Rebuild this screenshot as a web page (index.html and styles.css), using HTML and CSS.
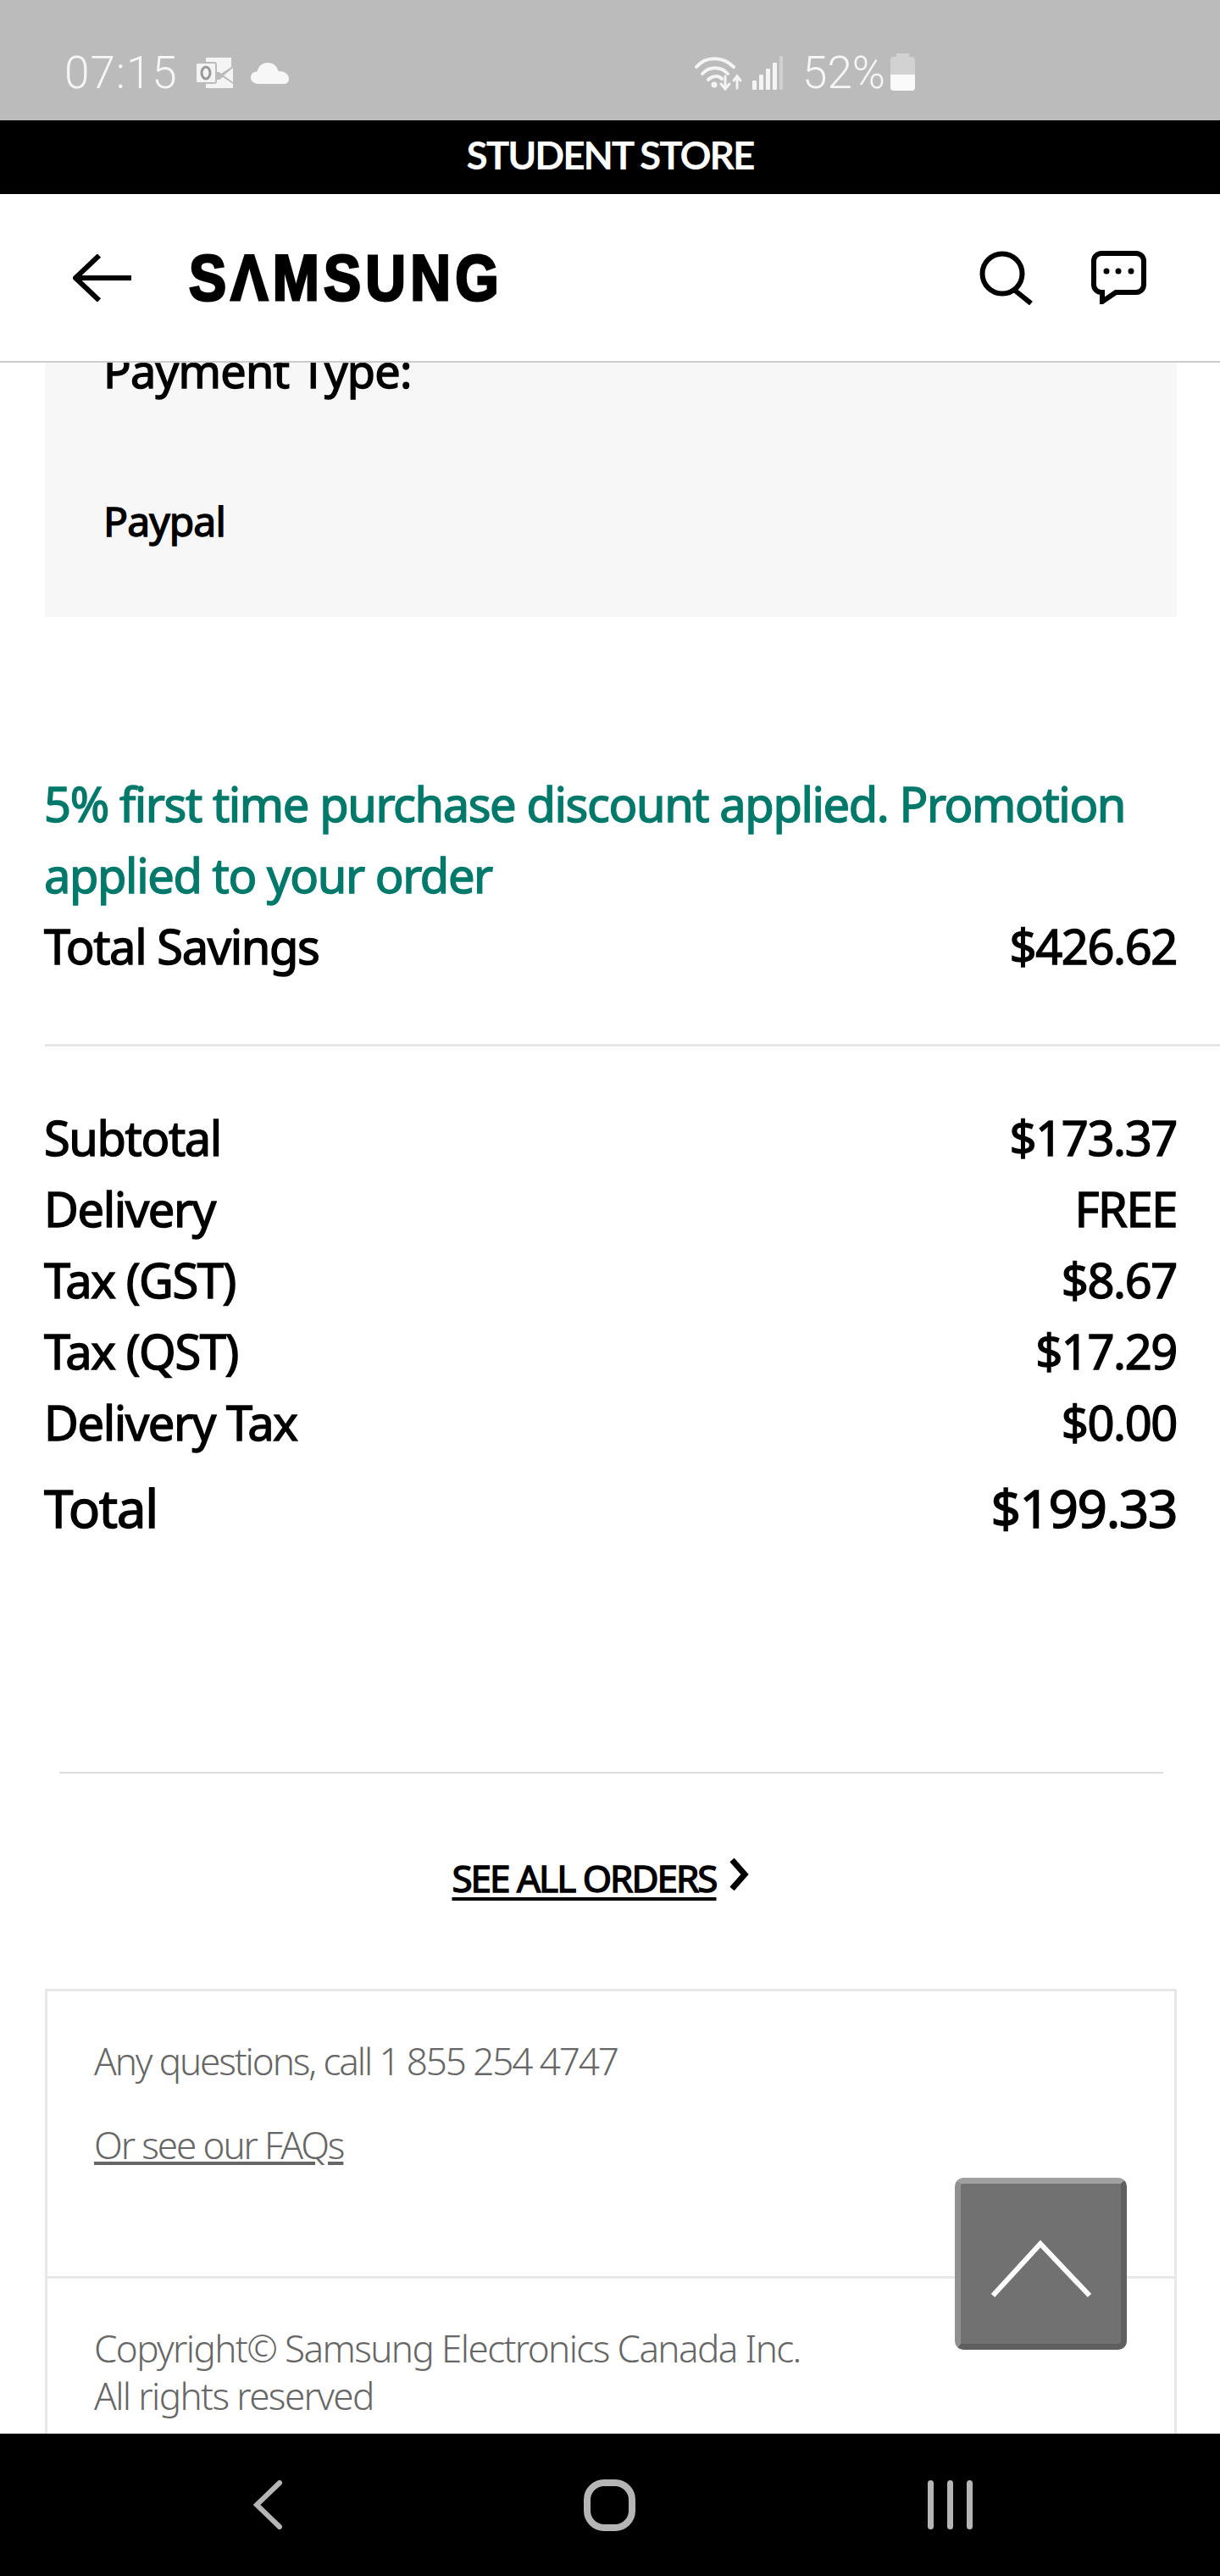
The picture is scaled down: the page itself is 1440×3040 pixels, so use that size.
FILE: index.html
```html
<!DOCTYPE html>
<html lang="en">
<head>
  <meta charset="UTF-8" />
  <meta name="viewport" content="width=device-width, initial-scale=1" />
  <title>Order details</title>
  <link rel="stylesheet" href="styles.css">
</head>
<body>

<div class="app">
  <div class="statusbar">
    <div class="status-left">
      <span class="clock">07:15</span>
      <svg class="ic-outlook" viewBox="0 0 44 36" aria-hidden="true">
        <path d="M12 0h30v11L30 19l-2-2H12z" fill="#f4f4f4"/>
        <path d="M12 26h16l4-3 12 8v5H12z" fill="#f4f4f4"/>
        <path d="M44 12v17l-11-8z" fill="#f4f4f4"/>
        <rect x="0" y="6" width="24" height="24" rx="2" fill="#f4f4f4" stroke="#bbb" stroke-width="2"/>
        <ellipse cx="12" cy="18" rx="5" ry="7" fill="none" stroke="#999" stroke-width="3"/>
      </svg>
      <svg class="ic-cloud" viewBox="0 0 45 25" aria-hidden="true">
        <path d="M9 25C3 25 0 21 0 17.500 0 13 3.500 10.500 7.500 10.500 9 4 14 0 20 0c6.500 0 11 4 12.500 10 6.500-.5 12.500 3 12.500 9 0 3.500-2 6-6 6z" fill="#f7f7f7"/>
      </svg>
    </div>
    <div class="status-right">
      <svg class="ic-wifi" viewBox="0 0 56 41" aria-hidden="true">
        <g fill="none" stroke="#f4f4f4" stroke-width="4" stroke-linecap="round">
          <path d="M2 13C13 0 33 0 46 13"/>
          <path d="M9 21c8-9 22-9 30 0"/>
          <path d="M16 28c5-5 12-5 16-1"/>
          <path d="M36 24v14M31 33l5 6 5-6" stroke-width="3"/>
          <path d="M50 38V24M46 29l4-5 4 5" stroke-width="3"/>
        </g>
        <circle cx="23" cy="34" r="3.500" fill="#f4f4f4"/>
      </svg>
      <svg class="ic-signal" viewBox="0 0 37 40" aria-hidden="true">
        <rect x="0" y="29" width="5" height="11" rx="1" fill="#f4f4f4"/>
        <rect x="8" y="22" width="5" height="18" rx="1" fill="#f4f4f4"/>
        <rect x="16" y="15" width="5" height="25" rx="1" fill="#f4f4f4"/>
        <rect x="24" y="8" width="5" height="32" rx="1" fill="#f4f4f4"/>
        <rect x="32" y="0" width="4" height="40" rx="1" fill="#d0d0d0"/>
      </svg>
      <span class="percent">52%</span>
      <div class="battery"><span class="battery-cap"></span><span class="battery-fill"></span></div>
    </div>
  </div>

  <div class="promo">STUDENT STORE</div>

  <header class="topbar">
    <svg class="ic-back" viewBox="0 0 70 56" aria-hidden="true">
      <path d="M69 28H3M31 1.500 3 28l0 0 28 26.500" fill="none" stroke="#000" stroke-width="6"/>
    </svg>
    <div class="logo" aria-label="SAMSUNG">SΛMSUNG</div>
    <svg class="ic-search" viewBox="0 0 64 64" aria-hidden="true">
      <circle cx="27" cy="27" r="23.500" fill="none" stroke="#000" stroke-width="6"/>
      <path d="M41 46l20 16" fill="none" stroke="#000" stroke-width="6"/>
    </svg>
    <svg class="ic-chat" viewBox="0 0 65 63" aria-hidden="true">
      <path d="M12 3h41a9 9 0 0 1 9 9v28a9 9 0 0 1-9 9H29L13 60V49h-1a9 9 0 0 1-9-9V12a9 9 0 0 1 9-9z" fill="none" stroke="#000" stroke-width="6"/>
      <circle cx="18" cy="24" r="3.500"/>
      <circle cx="32" cy="24" r="3.500"/>
      <circle cx="47" cy="24" r="3.500"/>
    </svg>
  </header>

  <main class="content">
    <section class="payment">
      <div class="payment-title">Payment Type:</div>
      <div class="payment-value">Paypal</div>
    </section>

    <p class="promo-note">5% first time purchase discount applied. Promotion applied to your order</p>
    <div class="row"><span>Total Savings</span><span>$426.62</span></div>

    <hr class="rule-wide">

    <div class="totals">
      <div class="row"><span>Subtotal</span><span>$173.37</span></div>
      <div class="row"><span>Delivery</span><span>FREE</span></div>
      <div class="row"><span>Tax (GST)</span><span>$8.67</span></div>
      <div class="row"><span>Tax (QST)</span><span>$17.29</span></div>
      <div class="row"><span>Delivery Tax</span><span>$0.00</span></div>
      <div class="row row-total"><span>Total</span><span>$199.33</span></div>
    </div>

    <hr class="rule-inset">

    <div class="see-all">
      <a href="#">SEE ALL ORDERS</a>
      <svg class="ic-chevron" viewBox="0 0 24 38" aria-hidden="true">
        <path d="M4 2l15 17L4 36" fill="none" stroke="#000" stroke-width="7"/>
      </svg>
    </div>

    <section class="help-box">
      <div class="help-top">
        <p>Any questions, call 1 855 254 4747</p>
        <p><a href="#">Or see our FAQs</a></p>
      </div>
      <div class="help-bottom">
        <p>Copyright© Samsung Electronics Canada Inc.<br>All rights reserved</p>
      </div>
    </section>

    <button class="to-top" type="button" aria-label="Back to top">
      <svg viewBox="0 0 120 70" aria-hidden="true">
        <path d="M3 66 59 5l58 61" fill="none" stroke="#fff" stroke-width="6"/>
      </svg>
    </button>
  </main>

  <nav class="navbar">
    <svg class="ic-nav-back" viewBox="0 0 34 58" aria-hidden="true">
      <path d="M31 3 4 29l27 26" fill="none" stroke="#b5b5b5" stroke-width="6" stroke-linecap="round"/>
    </svg>
    <div class="nav-home"></div>
    <div class="nav-recent"><span></span><span></span><span></span></div>
  </nav>
</div>

</body>
</html>
```

FILE: styles.css
```css
* {
  box-sizing: border-box;
}
body {
  margin: 0;
  background: #fff;
  font-family: 'Noto Sans', sans-serif;
  color: #000;
}
.app {
  width: 1440px;
  height: 3040px;
  display: flex;
  flex-direction: column;
  overflow: hidden;
}

/* Barra de estado */
.statusbar {
  height: 142px;
  background: #bbb;
  color: #f6f6f6;
  font-family: 'Roboto', sans-serif;
  font-weight: 300;
  font-size: 53px;
  position: relative;
  flex: none;
}
.status-left, .status-right {
  display: flex;
  align-items: center;
  height: 142px;
  padding-top: 30px;
}
.status-left {
  padding-left: 76px;
  gap: 21px;
  float: left;
}
.status-right {
  padding-left: 820px;
  gap: 12px;
  position: absolute;
  left: 0;
  top: 0;
}
.clock {
  letter-spacing: 1px;
}
.ic-outlook {
  width: 44px;
  height: 36px;
}
.ic-cloud {
  width: 45px;
  height: 25px;
}
.ic-wifi {
  width: 56px;
  height: 41px;
}
.ic-signal {
  width: 37px;
  height: 40px;
}
.percent {
  margin-left: 10px;
  margin-right: -6px;
}
.battery {
  width: 29px;
  height: 40px;
  position: relative;
  background: #d2d2d2;
  border-radius: 4px;
  margin-top: 2px;
}
.battery-cap {
  position: absolute;
  top: -4px;
  left: 7px;
  width: 15px;
  height: 6px;
  background: #d2d2d2;
}
.battery-fill {
  position: absolute;
  left: 0;
  right: 0;
  bottom: 0;
  height: 19px;
  background: #fafafa;
  border-radius: 0 0 4px 4px;
}

.promo {
  height: 87px;
  flex: none;
  background: #000;
  color: #fff;
  font-family: 'Lato', sans-serif;
  font-weight: 700;
  font-size: 46px;
  letter-spacing: -2.1px;
  text-align: center;
  line-height: 82px;
}

/* Cabecera */
.topbar {
  height: 199px;
  flex: none;
  display: flex;
  align-items: center;
  background: #fff;
  border-bottom: 2px solid #ccc;
  padding-left: 86px;
  position: relative;
  z-index: 2;
}
.ic-back {
  width: 70px;
  height: 56px;
}
.logo {
  margin-left: 67px;
  font-family: 'Liberation Sans', sans-serif;
  font-weight: 700;
  font-size: 76px;
  line-height: 56px;
  letter-spacing: 6px;
  -webkit-text-stroke: 3px #000;
  transform: scaleX(0.87);
  transform-origin: left center;
}
.ic-search {
  width: 64px;
  height: 64px;
  margin-left: auto;
}
.ic-chat {
  width: 65px;
  height: 63px;
  margin-left: 68px;
  margin-right: 87px;
}

/* Contenido */
.content {
  flex: 1;
  position: relative;
  overflow: hidden;
  padding: 0 51px 0 52px;
  font-size: 56px;
  letter-spacing: -1.4px;
  line-height: 84px;
  -webkit-text-stroke: 1.4px currentColor;
}
.payment {
  margin: -33px 0 0 1px;
  background: #f7f7f7;
  padding: 0 69px;
  height: 333px;
}
.payment-title {
  font-size: 54px;
  letter-spacing: -0.7px;
}
.payment-value {
  margin-top: 94px;
  font-size: 48px;
  letter-spacing: -0.9px;
}
.promo-note {
  margin: 178px 0 0;
  color: #00796b;
}
.row {
  display: flex;
  justify-content: space-between;
}
.rule-wide {
  margin: 74px -51px 0 1px;
  border: 0;
  height: 3px;
  background: #e6e6e6;
}
.totals {
  margin-top: 65px;
}
.row-total {
  margin-top: 17px;
  font-size: 62px;
}
.rule-inset {
  margin: 270px 16px 0 18px;
  border: 0;
  height: 2px;
  background: #ddd;
}
.see-all {
  margin-top: 81px;
  height: 84px;
  display: flex;
  align-items: center;
  justify-content: center;
  gap: 16px;
  font-size: 44px;
  letter-spacing: -2px;
  padding-right: 24px;
}
.see-all a {
  color: #000;
  text-underline-offset: 6px;
}
.ic-chevron {
  width: 24px;
  height: 38px;
  margin-top: -8px;
  margin-left: -2px;
}
.help-box {
  margin: 89px 0 0 1px;
  height: 700px;
  border: 3px solid #e8e8e8;
  border-bottom: 0;
  font-size: 44px;
  font-weight: 300;
  letter-spacing: -1.6px;
  -webkit-text-stroke: 0;
  color: #666;
  line-height: 56px;
}
.help-box p {
  margin: 0;
}
.help-box a {
  color: #666;
}
.help-top {
  height: 339px;
  padding: 54px 55px 0;
  border-bottom: 3px solid #e8e8e8;
  letter-spacing: -2.1px;
}
.help-top p + p {
  margin-top: 43px;
}
.help-bottom {
  padding: 54px 55px 0;
}
.to-top {
  position: absolute;
  left: 1127px;
  top: 2142px;
  width: 203px;
  height: 203px;
  padding: 0;
  border-style: solid;
  border-width: 7px;
  border-color: #a0a0a0 #5f5f5f #5f5f5f #909090;
  border-radius: 10px;
  background: rgba(105, 105, 105, 0.95);
  display: flex;
  align-items: flex-start;
  justify-content: center;
}
.to-top svg {
  width: 120px;
  height: 70px;
  margin-top: 66px;
}

/* Barra de navegacion */
.navbar {
  height: 168px;
  flex: none;
  background: #000;
  display: flex;
  align-items: center;
  padding-left: 299px;
}
.ic-nav-back {
  width: 34px;
  height: 58px;
}
.nav-home {
  width: 61px;
  height: 61px;
  margin-left: 356px;
  border: 8px solid #b5b5b5;
  border-radius: 24px;
}
.nav-recent {
  display: flex;
  gap: 16px;
  margin-left: 345px;
}
.nav-recent span {
  width: 7px;
  height: 58px;
  background: #b5b5b5;
  border-radius: 4px;
}
```
